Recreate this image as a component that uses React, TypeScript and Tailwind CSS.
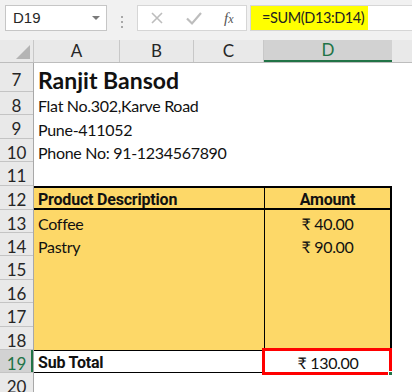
import React from 'react'

const FONT = { fontFamily: 'Lato, "Open Sans", "Liberation Sans", sans-serif' }
const BOLD = { fontFamily: 'Roboto, Lato, sans-serif', letterSpacing: '-0.2px' }

type Row = { n: number; h: string; sel?: boolean }

const ROWS: Row[] = [
  { n: 7, h: 'h-[29px]' },
  { n: 8, h: 'h-[23px]' },
  { n: 9, h: 'h-[24px]' },
  { n: 10, h: 'h-[23px]' },
  { n: 11, h: 'h-[24px]' },
  { n: 12, h: 'h-[24px]' },
  { n: 13, h: 'h-[23px]' },
  { n: 14, h: 'h-[23px]' },
  { n: 15, h: 'h-[24px]' },
  { n: 16, h: 'h-[23px]' },
  { n: 17, h: 'h-[24px]' },
  { n: 18, h: 'h-[23px]' },
  { n: 19, h: 'h-[23px]', sel: true },
  { n: 20, h: 'h-[23px]' },
]

function Toolbar() {
  return (
    <div className="flex h-[40px] bg-[#f1f1f1] pt-[5px]">
      <div className="ml-[5px] flex h-[26px] w-[102px] items-center justify-between border border-[#c6c6c6] bg-white pl-[7px] pr-[6px]">
        <span className="text-[15px] text-[#262626]" style={{ fontFamily: '"Liberation Sans", sans-serif' }}>D19</span>
        <span className="h-0 w-0 border-x-[4px] border-t-[4px] border-x-transparent border-t-[#7a7a7a]" />
      </div>
      <div className="flex w-[30px] flex-col items-center justify-center gap-[3px] pb-[2px]">
        <span className="h-[2px] w-[2px] bg-[#a8a8a8]" />
        <span className="h-[2px] w-[2px] bg-[#a8a8a8]" />
        <span className="h-[2px] w-[2px] bg-[#a8a8a8]" />
      </div>
      <div className="flex h-[26px] w-[110px] items-center border border-[#d6d6d6] bg-white">
        <svg width="38" height="26" viewBox="0 0 38 26" className="shrink-0">
          <path d="M14 8 L24 18 M24 8 L14 18" stroke="#bdbdbd" strokeWidth="1.6" />
        </svg>
        <svg width="36" height="26" viewBox="0 0 36 26" className="shrink-0">
          <path d="M11 13.5 L16 18.5 L25 8" stroke="#bdbdbd" strokeWidth="2.2" fill="none" />
        </svg>
        <span
          className="ml-[12px] text-[15px] italic text-[#555]"
          style={{ fontFamily: '"Liberation Serif", serif' }}
        >
          f<span className="text-[12px]">x</span>
        </span>
      </div>
      <div className="ml-[3px] flex h-[26px] flex-1 items-center border-y border-l border-[#d6d6d6] bg-white">
        <div
          className="flex h-[24px] w-[117px] items-center whitespace-nowrap bg-[#ffff00] pl-[11px] text-[14.5px] text-[#222]"
          style={{ fontFamily: 'Lato, sans-serif', letterSpacing: '-0.4px' }}
        >
          =SUM(D13:D14)
        </div>
      </div>
    </div>
  )
}

function ColumnHeader() {
  const cols = [
    { l: 'A', w: 'w-[86px]' },
    { l: 'B', w: 'w-[74px]' },
    { l: 'C', w: 'w-[70px]' },
  ]
  return (
    <div className="flex h-[23px] border-b border-[#bdbdbd] bg-[#e9e9e9] text-[17px] text-[#262626]" style={FONT}>
      <div className="relative w-[34px] border-r border-[#c8c8c8]">
        <span className="absolute bottom-[3px] right-[3px] h-0 w-0 border-b-[14px] border-l-[14px] border-b-[#b4b4b4] border-l-transparent" />
      </div>
      {cols.map((c) => (
        <div key={c.l} className={`${c.w} flex items-center justify-center border-r border-[#c8c8c8]`}>
          {c.l}
        </div>
      ))}
      <div className="flex w-[128px] items-center justify-center border-b-2 border-[#217346] bg-[#d2d2d2] text-[#217346]">
        D
      </div>
      <div className="flex-1" />
    </div>
  )
}

function Gutter() {
  return (
    <div className="w-[34px] shrink-0 border-r border-[#a8a8a8] bg-[#e9e9e9] text-[17px] text-[#262626]" style={FONT}>
      {ROWS.map((r) => (
        <div
          key={r.n}
          className={`${r.h} flex items-center justify-center border-b border-[#c4c4c4] pt-[5px] ${
            r.sel ? 'bg-[#d2d2d2] text-[#217346] shadow-[inset_-2px_0_0_#217346]' : ''
          }`}
        >
          {r.n}
        </div>
      ))}
    </div>
  )
}

function Body() {
  return (
    <div className="relative flex-1 bg-white text-[16px] tracking-[-0.3px] text-[#111]" style={FONT}>
      <div className="flex h-[29px] items-center pl-[4px] pt-[5px] text-[23px] font-bold tracking-normal">Ranjit Bansod</div>
      <div className="flex h-[23px] items-center pl-[4px] pt-[5px]">Flat No.302,Karve Road</div>
      <div className="flex h-[24px] items-center pl-[4px] pt-[5px]">Pune-411052</div>
      <div className="flex h-[23px] items-center pl-[4px] pt-[5px]">Phone No: 91-1234567890</div>
      <div className="h-[24px]" />

      <div className="w-[358px] border-r-2 border-t-2 border-black bg-[#fdd868]">
        <div className="flex h-[22px] border-b-2 border-black font-bold" style={BOLD}>
          <div className="flex w-[230px] items-center pl-[4px] pt-[4px]">Product Description</div>
          <div className="flex flex-1 items-center justify-center border-l border-black pt-[4px]">Amount</div>
        </div>
        <div className="flex h-[140px]">
          <div className="w-[230px] pl-[4px]">
            <div className="flex h-[23px] items-center pt-[5px]">Coffee</div>
            <div className="flex h-[23px] items-center pt-[5px]">Pastry</div>
          </div>
          <div className="flex-1 border-l border-black text-center">
            <div className="flex h-[23px] items-center justify-center pt-[5px]">₹ 40.00</div>
            <div className="flex h-[23px] items-center justify-center pt-[5px]">₹ 90.00</div>
          </div>
        </div>
      </div>

      <div className="flex h-[23px] w-[358px] border-y border-black">
        <div className="flex w-[230px] items-center pl-[4px] pt-[3px] font-bold" style={BOLD}>Sub Total</div>
        <div className="flex flex-1 items-center justify-center pt-[3px]">₹ 130.00</div>
      </div>

      <div className="absolute left-[228px] top-[285px] h-[27px] w-[130px] border-[3px] border-[#ff0000]">
        <span className="absolute -bottom-[4px] -right-[4px] h-[5px] w-[5px] border border-white bg-[#217346]" />
      </div>
    </div>
  )
}

export default function App() {
  return (
    <div className="h-[392px] w-[412px] overflow-hidden bg-white">
      <Toolbar />
      <ColumnHeader />
      <div className="flex">
        <Gutter />
        <Body />
      </div>
    </div>
  )
}
